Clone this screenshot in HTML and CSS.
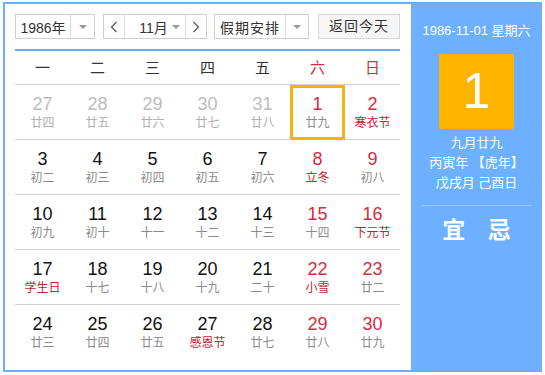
FILE: index.html
```html
<!DOCTYPE html>
<html lang="zh-CN">
<head>
	<meta charset="utf-8" />
	<title>万年历</title>
    <link rel="stylesheet" href="styles.css">
</head>
<body>
    <div class="frame">
        <div class="cal">
            <div class="toolbar">
                <div class="sel year"><span class="val">1986年</span><span class="arrow"></span></div>
                <div class="sel month">
                    <span class="nav"><svg width="8" height="12" viewBox="0 0 8 12"><path d="M6.5 1 L1.5 6 L6.5 11" fill="none" stroke="#555" stroke-width="1.2"/></svg></span>
                    <span class="val">11月</span><span class="arrow noline"></span>
                    <span class="nav right"><svg width="8" height="12" viewBox="0 0 8 12"><path d="M1.5 1 L6.5 6 L1.5 11" fill="none" stroke="#555" stroke-width="1.2"/></svg></span>
                </div>
                <div class="sel holiday"><span class="val">假期安排</span><span class="arrow"></span></div>
                <div class="btn">返回今天</div>
            </div>
            <div class="week">
                <span>一</span><span>二</span><span>三</span><span>四</span><span>五</span><span class="red">六</span><span class="red">日</span>
            </div>
            <div class="days">
                <div class="day other"><b>27</b><i>廿四</i></div>
                <div class="day other"><b>28</b><i>廿五</i></div>
                <div class="day other"><b>29</b><i>廿六</i></div>
                <div class="day other"><b>30</b><i>廿七</i></div>
                <div class="day other"><b>31</b><i>廿八</i></div>
                <div class="day wk today"><b>1</b><i>廿九</i></div>
                <div class="day wk"><b>2</b><i class="fest">寒衣节</i></div>

                <div class="day"><b>3</b><i>初二</i></div>
                <div class="day"><b>4</b><i>初三</i></div>
                <div class="day"><b>5</b><i>初四</i></div>
                <div class="day"><b>6</b><i>初五</i></div>
                <div class="day"><b>7</b><i>初六</i></div>
                <div class="day wk"><b>8</b><i class="fest">立冬</i></div>
                <div class="day wk"><b>9</b><i>初八</i></div>

                <div class="day"><b>10</b><i>初九</i></div>
                <div class="day"><b>11</b><i>初十</i></div>
                <div class="day"><b>12</b><i>十一</i></div>
                <div class="day"><b>13</b><i>十二</i></div>
                <div class="day"><b>14</b><i>十三</i></div>
                <div class="day wk"><b>15</b><i>十四</i></div>
                <div class="day wk"><b>16</b><i class="fest">下元节</i></div>

                <div class="day"><b>17</b><i class="fest">学生日</i></div>
                <div class="day"><b>18</b><i>十七</i></div>
                <div class="day"><b>19</b><i>十八</i></div>
                <div class="day"><b>20</b><i>十九</i></div>
                <div class="day"><b>21</b><i>二十</i></div>
                <div class="day wk"><b>22</b><i class="fest">小雪</i></div>
                <div class="day wk"><b>23</b><i>廿二</i></div>

                <div class="day last"><b>24</b><i>廿三</i></div>
                <div class="day last"><b>25</b><i>廿四</i></div>
                <div class="day last"><b>26</b><i>廿五</i></div>
                <div class="day last"><b>27</b><i class="fest">感恩节</i></div>
                <div class="day last"><b>28</b><i>廿七</i></div>
                <div class="day last wk"><b>29</b><i>廿八</i></div>
                <div class="day last wk"><b>30</b><i>廿九</i></div>
            </div>
        </div>
        <div class="side">
            <div class="date">1986-11-01 星期六</div>
            <div class="big">1</div>
            <div class="lunar">
                <p>九月廿九</p>
                <p>丙寅年 【虎年】</p>
                <p>戊戌月 己酉日</p>
            </div>
            <div class="yiji"><span>宜</span><span>忌</span></div>
        </div>
    </div>
</body>
</html>
```

FILE: styles.css
```css
body{
    margin: 0;
    font-family: "Liberation Sans", Arial, "Noto Sans CJK SC", sans-serif;
    background: #fff;
}
.frame{
    display: flex;
    margin: 2px 0 0 3px;
    width: 539px;
    height: 370px;
    box-sizing: border-box;
    border: 2px solid #6aaef4;
    border-right: none;
}
.cal{
    width: 385px;
    padding: 10px 11px 0 10px;
}
.toolbar{
    display: flex;
    height: 25px;
    font-size: 14px;
    color: #333;
}
.sel{
    display: flex;
    align-items: center;
    box-sizing: border-box;
    height: 25px;
    border: 1px solid #cfcfcf;
    background: #fff;
}
.year{
    width: 80px;
    margin-right: 8px;
}
.year .val{
    width: 54px;
    text-align: center;
}
.month{
    width: 104px;
    margin-right: 7px;
}
.month .val{
    width: 44px;
    text-align: right;
}
.holiday{
    width: 95px;
    margin-right: 9px;
}
.holiday .val{
    width: 70px;
    text-align: center;
    letter-spacing: 1px;
}
.arrow{
    flex: 1;
    align-self: stretch;
    border-left: 1px solid #dcdcdc;
    position: relative;
}
.arrow::after{
    content: "";
    position: absolute;
    left: 50%;
    top: 10px;
    margin-left: -4px;
    border: 4px solid transparent;
    border-top-color: #999;
    border-bottom: none;
}
.arrow.noline{
    flex: none;
    width: 17px;
    border-left: none;
}
.nav{
    display: flex;
    align-items: center;
    justify-content: center;
    width: 21px;
    align-self: stretch;
    border-right: 1px solid #dcdcdc;
}
.nav.right{
    border-right: none;
    border-left: 1px solid #dcdcdc;
    margin-left: auto;
}
.btn{
    width: 82px;
    height: 25px;
    box-sizing: border-box;
    border: 1px solid #d6d6d6;
    background: #f6f6f6;
    text-align: center;
    line-height: 23px;
    letter-spacing: 1px;
}
.week{
    display: grid;
    grid-template-columns: repeat(7, 55px);
    margin-top: 10px;
    border-top: 2px solid #6aaef4;
    border-bottom: 1px solid #d2d2d2;
    height: 33px;
    line-height: 33px;
    font-size: 15px;
    color: #333;
    text-align: center;
}
.red{
    color: #d22c3e;
}
.days{
    display: grid;
    grid-template-columns: repeat(7, 55px);
}
.day{
    display: flex;
    flex-direction: column;
    align-items: center;
    box-sizing: border-box;
    height: 55px;
    padding-top: 9px;
    border-bottom: 1px solid #d2d2d2;
}
.day.last{
    border-bottom: none;
}
.day b{
    font-weight: normal;
    font-size: 18px;
    line-height: 20px;
    color: #111;
}
.day i{
    font-style: normal;
    font-size: 12px;
    line-height: 19px;
    color: #8a8a8a;
}
.day.other b{
    color: #bcbcbc;
}
.day.other i{
    color: #b0b0b0;
}
.day.wk b{
    color: #d22c3e;
}
.day i.fest{
    color: #c0242f;
}
.day.today{
    border: 3px solid #f3b40a;
    padding-top: 6px;
}
.side{
    flex: 1;
    background: #6cb0ff;
    color: #fff;
    text-align: center;
}
.date{
    margin-top: 19px;
    font-size: 13px;
    line-height: 16px;
}
.big{
    width: 75px;
    height: 75px;
    margin: 15px auto 0;
    background: #ffb500;
    border-radius: 2px;
    font-size: 50px;
    line-height: 75px;
}
.lunar{
    margin-top: 4px;
    font-size: 13px;
}
.lunar p{
    margin: 0;
    line-height: 20px;
}
.yiji{
    display: flex;
    justify-content: space-around;
    margin: 12px 10px 0;
    padding: 0 10px;
    border-top: 1px solid #94c6ff;
    font-size: 23px;
    line-height: 48px;
    font-weight: bold;
}
```
